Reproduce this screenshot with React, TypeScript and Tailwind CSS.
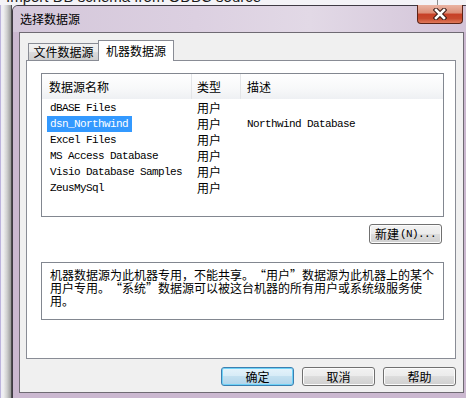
import React from 'react';

const cjk = "font-['Noto_Sans_CJK_SC',sans-serif]";
const mono = "font-['Liberation_Mono','Noto_Sans_CJK_SC',monospace] text-[11px] tracking-[-0.6px]";

const sources = [
  { name: 'dBASE Files', type: '用户', desc: '' },
  { name: 'dsn_Northwind', type: '用户', desc: 'Northwind Database', selected: true },
  { name: 'Excel Files', type: '用户', desc: '' },
  { name: 'MS Access Database', type: '用户', desc: '' },
  { name: 'Visio Database Samples', type: '用户', desc: '' },
  { name: 'ZeusMySql', type: '用户', desc: '' },
];

// full-width quote cells, as the dialog font draws them
const Lq = () => <span className="inline-block w-[12px] text-right">“</span>;
const Rq = () => <span className="inline-block w-[12px] text-left">”</span>;

function Btn({ children, primary, className = '' }: { children: React.ReactNode; primary?: boolean; className?: string }) {
  const look = primary
    ? 'border-[#3c7fb1] bg-[linear-gradient(#e5f3fb,#d6ebf6_50%,#c3e0f0_50%,#b2d4ea)] shadow-[inset_0_0_0_1px_#6fd2f7]'
    : 'border-[#707070] bg-[linear-gradient(#f2f2f2,#ebebeb_50%,#dddddd_50%,#cfcfcf)] shadow-[inset_0_0_0_1px_#fcfcfc]';
  return (
    <div className={`flex items-center justify-center rounded-[3px] border leading-none ${look} ${className}`}>
      {children}
    </div>
  );
}

function CloseButton() {
  return (
    <div className="mt-[-1px] mr-[7px] h-[19px] w-[46px] rounded-b-[4px] border border-t-0 border-[#5b2418] bg-[linear-gradient(#eab3a3,#dc8f78_45%,#c73f26_50%,#c84a2e_75%,#e07a5a)] flex items-center justify-center">
      <svg width="14" height="12" viewBox="0 0 14 12">
        <path d="M3 2 L11 10 M11 2 L3 10" stroke="#3b1b16" strokeWidth="4.6" strokeLinecap="square" />
        <path d="M3 2 L11 10 M11 2 L3 10" stroke="#ffffff" strokeWidth="2.6" strokeLinecap="square" />
      </svg>
    </div>
  );
}

export default function App() {
  return (
    <div className={`w-[466px] h-[398px] overflow-hidden flex flex-col bg-[#eceaf2] text-[12px] text-black ${cjk}`}>
      {/* window behind the dialog */}
      <div className="h-[5px] shrink-0 overflow-hidden bg-[#f4f3f7] flex">
        <div className="pl-[6px] mt-[-11px] font-['Liberation_Sans',sans-serif] text-[15px] leading-[16px] text-[#1a1a1a] whitespace-nowrap">
          Import DB schema from ODBC source
        </div>
        <div className="ml-auto w-[1px] bg-[#8c8c8c] mr-[28px]" />
      </div>

      <div className="flex flex-1 min-h-0">
        <div className="w-[12px] shrink-0 flex">
          <div className="w-[1px] bg-[#bcb4dc]" />
          <div className="w-[2px] bg-[#eeedf4]" />
          <div className="w-[8px] bg-[linear-gradient(90deg,#f2f2f2,#cfcfcf_50%,#9a9a9a)]" />
          <div className="w-[1px] bg-[#4e4e4e]" />
        </div>

        {/* dialog */}
        <div className="w-[459px] shrink-0 h-[395px] rounded-t-[6px] border border-[#3f3a44] bg-[#cbb8d0] flex flex-col">
          <div className="h-[26px] shrink-0 rounded-t-[5px] bg-[linear-gradient(90deg,#d4c7da,#dcd0e1_40%,#e2d9e6_65%,#d2c3d8)] flex items-start">
            <div className="self-center pl-[7px] leading-none">选择数据源</div>
            <div className="ml-auto">
              <CloseButton />
            </div>
          </div>

          <div className="flex px-[6px]">
            {/* client area */}
            <div className="w-[445px] h-[361px] border border-[#6f6a73] bg-[#f0f0f0] flex flex-col pl-[6px] pr-[7px] pt-[7px]">
              {/* tabs */}
              <div className="h-[20px] flex items-end pl-[2px]">
                <div className="h-[17px] w-[71px] border border-b-0 border-[#898c95] bg-[linear-gradient(#f2f2f2,#ebebeb_50%,#dddddd_50%,#cfcfcf)] flex items-center justify-center leading-none">
                  文件数据源
                </div>
                <div className="relative z-10 mb-[-1px] ml-[-1px] h-[21px] w-[76px] border border-b-0 border-[#898c95] bg-white flex items-center justify-center leading-none pb-[1px]">
                  机器数据源
                </div>
              </div>

              {/* tab page */}
              <div className="h-[299px] border border-[#898c95] bg-white flex flex-col pl-[14px] pr-[11px] pt-[12px]">
                {/* list view */}
                <div className="h-[144px] border border-[#828790] bg-white flex flex-col">
                  <div className="h-[25px] flex bg-[linear-gradient(#ffffff,#f7f8f9_60%,#eef0f3)] leading-none">
                    <div className="w-[150px] border-r border-[#e3e5e8] pl-[7px] flex items-center">数据源名称</div>
                    <div className="w-[49px] border-r border-[#e3e5e8] pl-[5px] flex items-center">类型</div>
                    <div className="flex-1 pl-[6px] flex items-center">描述</div>
                  </div>
                  <div className="pt-[1px] flex flex-col">
                    {sources.map((s) => (
                      <div key={s.name} className="h-[16px] flex items-center leading-none">
                        <div className="w-[150px] pl-[5px] flex">
                          <span className={`h-[16px] flex items-center pl-[3px] pr-[4px] ${mono} ${s.selected ? 'bg-[#3399ff] text-white' : ''}`}>
                            {s.name}
                          </span>
                        </div>
                        <div className="w-[49px] pl-[5px]">{s.type}</div>
                        <div className={`flex-1 pl-[6px] ${mono}`}>{s.desc}</div>
                      </div>
                    ))}
                  </div>
                </div>

                <div className="mt-[7px] flex justify-end pr-[2px]">
                  <Btn className="h-[20px] w-[73px]">
                    <span>新建</span>
                    <span className={`${mono} ml-[1px]`}>(N)...</span>
                  </Btn>
                </div>

                <div className="mt-[18px] h-[58px] border border-[#828790] bg-white pl-[8px] pt-[5px] whitespace-nowrap">
                  <div className="h-[13px] leading-[13px]">
                    机器数据源为此机器专用，不能共享。<Lq />用户<Rq />数据源为此机器上的某个
                  </div>
                  <div className="h-[13px] leading-[13px]">
                    用户专用。<Lq />系统<Rq />数据源可以被这台机器的所有用户或系统级服务使
                  </div>
                  <div className="h-[13px] leading-[13px]">用。</div>
                </div>
              </div>

              {/* dialog buttons */}
              <div className="mt-[8px] flex justify-end gap-[8px]">
                <Btn primary className="h-[19px] w-[73px]">确定</Btn>
                <Btn className="h-[19px] w-[73px]">取消</Btn>
                <Btn className="h-[19px] w-[73px]">帮助</Btn>
              </div>
            </div>
          </div>
        </div>
      </div>
    </div>
  );
}
